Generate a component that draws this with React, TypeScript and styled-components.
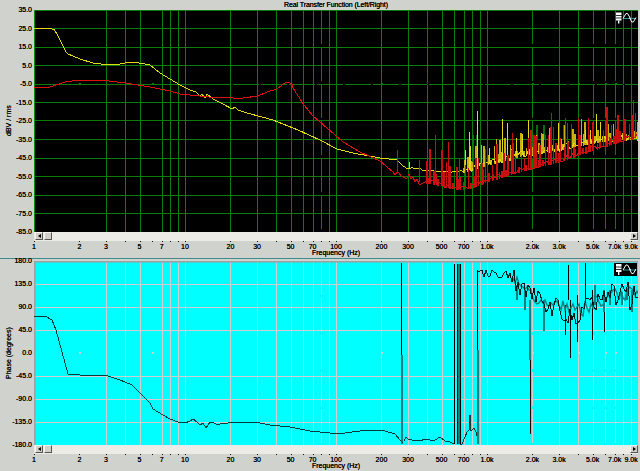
import React from "react";
import styled, { createGlobalStyle } from "styled-components";

const Global = createGlobalStyle`
  html, body { margin: 0; padding: 0; background: #d0d2ce; }
`;

const Page = styled.div`
  width: 640px;
  height: 471px;
  overflow: hidden;
  background: #d0d2ce;
  color: #000;
  font-family: "Liberation Sans", Arial, sans-serif;
  font-size: 7px;
  text-shadow: 0 0 0.4px #000;
  display: flex;
  flex-direction: column;
`;
const Pane = styled.section<{ $h: number; $rule?: boolean }>`
  height: ${(p) => p.$h}px;
  flex: none;
  display: flex;
  flex-direction: column;
  box-sizing: border-box;
  border-bottom: ${(p) => (p.$rule ? "1px solid #3f8a8a" : "none")};
`;
const Title = styled.div`
  height: 10px;
  flex: none;
  line-height: 10px;
  text-align: center;
  padding-left: 32px;
  letter-spacing: -0.1px;
`;
const TopGap = styled.div`
  height: 2px;
  flex: none;
`;
const PlotRow = styled.div`
  display: flex;
  flex: none;
`;
const AxisCol = styled.div`
  width: 34px;
  flex: none;
  display: flex;
`;
const AxisName = styled.div`
  width: 18px;
  writing-mode: vertical-rl;
  transform: rotate(180deg);
  text-align: center;
  line-height: 18px;
  white-space: nowrap;
`;
const Ticks = styled.div<{ $h: number }>`
  width: 14px;
  height: ${(p) => p.$h + 8}px;
  margin: -4px 0;
  padding-right: 3px;
  display: flex;
  flex-direction: column;
  justify-content: space-between;
  align-items: flex-end;
  white-space: nowrap;
  line-height: 8px;
`;
const Plot = styled.svg`
  display: block;
  flex: none;
`;
const Strip = styled.div`
  margin-left: 34px;
  width: 604px;
  height: 9px;
  background: #ecebe6;
  display: flex;
  align-items: flex-start;
  padding-left: 1px;
  box-sizing: border-box;
  flex: none;
`;
const ScrollBtn = styled.div<{ $end?: boolean }>`
  width: 8px;
  height: 8px;
  flex: none;
  box-sizing: border-box;
  margin-left: ${(p) => (p.$end ? "auto" : "0")};
  background: #d4d0c8;
  border: 1px solid;
  border-color: #f4f4f0 #555 #555 #f4f4f0;
  display: flex;
  align-items: center;
  justify-content: center;
`;
const Thumb = styled(ScrollBtn)`
  margin-left: 1px;
`;
const Arrow = styled.i<{ $right?: boolean }>`
  display: block;
  width: 0;
  height: 0;
  border-top: 2.5px solid transparent;
  border-bottom: 2.5px solid transparent;
  border-right: ${(p) => (p.$right ? "0" : "3px solid #000")};
  border-left: ${(p) => (p.$right ? "3px solid #000" : "0")};
`;
const XAxis = styled.svg`
  display: block;
  flex: none;
`;
const XTick = styled.text`
  font-family: "Liberation Sans", Arial, sans-serif;
  font-size: 7px;
  fill: #000;
  text-anchor: middle;
`;
const XName = styled.div`
  height: 8px;
  line-height: 8px;
  text-align: center;
  padding-left: 32px;
  margin-top: -1px;
  flex: none;
`;
const Trace = styled.polyline<{ $c: string }>`
  fill: none;
  stroke: ${(p) => p.$c};
  stroke-width: 1;
  shape-rendering: crispEdges;
`;

const fx = (f: number) => 34 + 151 * Math.log10(f);
type Pt = [number, number];
const path = (p: Pt[]) => p.map((q) => q[0] + "," + q[1]).join(" ");
const interp = (p: Pt[], x: number) => {
  for (let i = 1; i < p.length; i++) {
    if (x <= p[i][0]) {
      const t = (x - p[i - 1][0]) / (p[i][0] - p[i - 1][0]);
      return p[i - 1][1] + t * (p[i][1] - p[i - 1][1]);
    }
  }
  return p[p.length - 1][1];
};
const rng = (seed: number) => {
  let s = seed;
  return () => {
    s = (s * 1664525 + 1013904223) % 4294967296;
    return s / 4294967296;
  };
};

const mult = [1, 2, 3, 4, 5, 6, 7, 8, 9];
const allF = [1, 10, 100, 1000].flatMap((d) => mult.map((m) => m * d));
const gridF = allF.filter((f) => f > 1 && f !== 2 && f !== 6);
const brokenF = [80, 2000, 5000, 6000, 7000];
const labelF: [number, string][] = [
  [1, "1"], [2, "2"], [3, "3"], [5, "5"], [7, "7"], [10, "10"], [20, "20"], [30, "30"], [50, "50"], [70, "70"],
  [100, "100"], [200, "200"], [300, "300"], [500, "500"], [700, "700"], [1000, "1.0k"], [2000, "2.0k"],
  [3000, "3.0k"], [5000, "5.0k"], [7000, "7.0k"], [9000, "9.0k"],
];

const Grid = ({ ys, top, bottom, color, zeroDots, zero }: { ys: number[]; top: number; bottom: number; color: string; zeroDots: number; zero?: boolean }) => (
  <g stroke={color} strokeWidth={1} shapeRendering="crispEdges">
    {gridF.map((f) => (
      <line key={f} x1={Math.round(fx(f)) + 0.5} x2={Math.round(fx(f)) + 0.5} y1={top} y2={bottom} strokeDasharray={brokenF.includes(f) ? "34 3" : undefined} />
    ))}
    {ys.map((y) => (
      <line key={y} x1={34} x2={638} y1={y + 0.5} y2={y + 0.5} />
    ))}
    {zero && <line x1={231} x2={638} y1={zeroDots + 0.5} y2={zeroDots + 0.5} stroke="#000" strokeDasharray="2 26" />}
    {[2, 6, 200, 2000, 4000, 6000, 7000].map((f) => (
      <rect key={f} x={Math.round(fx(f))} y={zeroDots - 1} width={2} height={2} fill={color} stroke="none" />
    ))}
  </g>
);

const ToolIcons = ({ y, boxed }: { y: number; boxed?: boolean }) => (
  <g transform={`translate(0 ${y})`} fill="none">
    {boxed && <rect x={614} y={-1} width={23} height={13} fill="#000" />}
    <rect x={616.5} y={0.5} width={4.5} height={7} fill="#fff" stroke="#fff" />
    <path d="M616 3h6M616 5.5h6" stroke="#000" strokeWidth={0.8} />
    <path d="M618.7 8v3" stroke="#fff" strokeWidth={1.4} />
    <path d="M623 6h13" stroke="#2f9a8f" strokeWidth={1} />
    <path d="M623 6l3-5h1.5l3 5" stroke="#fff" strokeWidth={1} />
    <path d="M629.5 5l2.2 4.5h1.6L636 5" stroke="#fff" strokeWidth={1} />
  </g>
);

/* upper traces */
const yellowLow: Pt[] = [[34,28],[42,28],[52,29],[54,29],[58,36],[66,52],[68,54],[80,59],[93,63],[105,64.5],[120,64],[128,62.5],[132,62],[145,64],[150,65],[160,73],[170,79],[180,85],[190,90],[196,92],[200,96],[202,94],[205,98],[207,94],[213,99],[223,104],[232,109],[235,107],[238,110],[247,113],[273,120],[293,128],[298,130],[320,140],[337,149],[353,153],[380,158],[397,160],[404,167]];
const redLow: Pt[] = [[34,88],[50,87],[65,82],[75,80.5],[105,80.5],[125,83],[150,87],[170,91],[180,94],[200,96],[213,97.5],[233,98],[243,98],[258,96],[267,92],[277,89],[282,85],[287,82],[290,83],[292,84],[293,88],[304,105],[313,116],[327,128],[343,142],[360,152],[380,161],[393,172]];
const redFloor: Pt[] = [[393,172],[410,177],[420,182],[430,182],[455,188],[470,187],[490,179],[520,170],[560,160],[600,146],[638,135]];
const yellowFloor: Pt[] = [[404,167],[420,169],[450,172],[470,170],[480,165],[520,155],[560,148],[600,140],[638,137]];

const Upper = () => {
  const r = rng(7);
  const yellowNoise: Pt[] = [];
  const redNoise: Pt[] = [[393, 172]];
  for (let x = 404; x <= 638; x += 2) {
    yellowNoise.push([x, Math.round(interp(yellowFloor, x) + (r() - 0.5) * (x > 470 ? 8 : 2))]);
  }
  for (let x = 395; x <= 638; x += 2) {
    redNoise.push([x, Math.round(interp(redFloor, x) + (r() - 0.5) * 5)]);
  }
  const ySp: [number, number][] = [[409,162],[469,132],[477,111],[502,119],[507,123],[528,120],[596,114],[465,150],[470,146],[473,150],[489,148],[516,138],[522,134],[536,135],[558,123],[585,130],[590,130],[600,122]];
  const rSp: [number, number][] = [[397,150],[419,160],[435,135],[448,142],[459,158],[473,135],[512,133],[551,113],[565,118],[578,118],[588,118],[611,125],[623,120],[633,100],[545,135]];
  const gSp: [number, number][] = [[537,125],[544,125],[477,135],[564,125]];
  const fillY: number[][] = [];
  const fillR: number[][] = [];
  for (let x = 462; x < 638; x += 2.5) {
    const fy = interp(yellowFloor, x);
    fillY.push([Math.round(x + r() * 2), fy, fy - 3 - Math.pow(r(), 2) * 26, r() > 0.3 ? 2 : 1]);
  }
  for (let x = 424; x < 638; x += 2.5) {
    const fr = interp(redFloor, x + 1);
    fillR.push([Math.round(x + 1 + r() * 2), fr, fr - 4 - Math.pow(r(), 2) * 34, r() > 0.3 ? 2 : 1]);
  }
  return (
    <Plot width={604} height={222} viewBox="34 10 604 222">
      <rect x={34} y={10} width={604} height={222} fill="#000" />
      <Grid ys={[10, 28, 47, 65, 84, 102, 120, 139, 158, 176, 195, 213]} top={10} bottom={232} color="#0a7d0a" zeroDots={84} zero />
      <line x1={34.5} x2={34.5} y1={10} y2={232} stroke="#0a8f0a" />
      <Trace points={path(yellowLow)} $c="#e0d818" />
      <Trace points={path(redLow)} $c="#e01010" />
      <g shapeRendering="crispEdges">
        {gSp.map(([x, y]) => <line key={x} x1={x} x2={x} y1={y} y2={y + 15} stroke="#0a6f0a" strokeWidth={2} />)}
        {fillY.map((s, i) => <line key={i} x1={s[0]} x2={s[0]} y1={s[1] + 2} y2={s[2]} stroke="#c8b010" strokeWidth={s[3]} />)}
        {ySp.map(([x, y]) => <line key={x} x1={x + 0.5} x2={x + 0.5} y1={y} y2={interp(yellowFloor, x)} stroke="#e0d818" strokeWidth={1} />)}
      </g>
      <Trace points={path(yellowNoise)} $c="#e0d818" />
      <g shapeRendering="crispEdges">
        {rSp.map(([x, y]) => <line key={x} x1={x + 0.5} x2={x + 0.5} y1={y} y2={interp(redFloor, x)} stroke="#c81010" strokeWidth={1} />)}
        {fillR.map((s, i) => <line key={i} x1={s[0]} x2={s[0]} y1={s[1] + 2} y2={s[2]} stroke="#c81010" strokeWidth={s[3]} />)}
      </g>
      <Trace points={path(redNoise)} $c="#d01010" />
      <ToolIcons y={12.5} />
    </Plot>
  );
};

/* lower traces */
const phaseLow: Pt[] = [[34,316],[45,316],[52,320],[56,330],[68,374],[80,375],[95,375],[105,375],[120,380],[132,385],[140,393],[150,403],[153,409],[163,415],[170,419],[178,422],[185,423],[190,421],[193,419],[197,422],[200,425],[203,423],[206,428],[210,422],[214,423],[218,425],[222,423],[226,424],[230,422],[240,422],[255,422],[270,425],[290,427],[310,431],[330,433],[345,433],[360,431],[375,430],[385,431],[395,434],[400,440],[403,443]];
const midNoise: Pt[] = [[404,441],[406,437],[408,439],[412,440],[416,440],[420,441],[425,439],[430,440],[435,440],[440,437],[445,441],[450,442],[454,444]];
const tail: Pt[] = [[460,444],[462,444],[465,437],[467,432],[469,430],[470,415],[471,431],[474,428],[476,432],[477,436]];
const hfBase: Pt[] = [[478,274],[510,274],[520,285],[535,298],[545,305],[560,305],[570,310],[580,310],[590,303],[600,298],[620,296],[638,293]];

const Lower = () => {
  const r = rng(31);
  const hf: Pt[] = [];
  const hfTeal: Pt[] = [];
  for (let x = 478; x <= 638; x += 2) {
    const amp = x < 510 ? 8 : x < 560 ? 22 : 32;
    hf.push([x, Math.round(interp(hfBase, x) + (r() - 0.5) * amp)]);
    if (x > 510) hfTeal.push([x + 1, Math.round(interp(hfBase, x) + (r() - 0.5) * amp * 0.5)]);
  }
  const teal: [number, number, number][] = [[401.5,355,444],[458.5,264,444],[477.5,350,444],[530,300,360],[544,300,331],[525,290,310],[517,285,300],[604,290,312],[595,285,305],[610,290,305],[622,292,305],[632,290,312],[627,288,300]];
  const black: [number, number, number][] = [[401.5,263,355],[454.5,264,444],[457,264,444],[460.5,264,444],[477.5,270,350],[530,360,434],[570,300,358],[565,305,335],[577,295,342],[604,312,332],[568,265,300],[585,263,305],[592,290,340]];
  return (
    <Plot width={604} height={184} viewBox="34 261 604 184">
      <rect x={34} y={261} width={604} height={184} fill="#00ffff" />
      <Grid ys={[284, 307, 330, 376, 399, 422]} top={261} bottom={445} color="#cfcfcf" zeroDots={353} />
      <path d="M34 261.5H638M34.5 261V445" stroke="#a0a0a0" strokeWidth={2} fill="none" />
      <g shapeRendering="crispEdges">
        {teal.map(([x, a, b], i) => <line key={i} x1={x} x2={x} y1={a} y2={b} stroke="#128080" strokeWidth={2} />)}
        {black.map(([x, a, b], i) => <line key={i} x1={x} x2={x} y1={a} y2={b} stroke="#000" strokeWidth={1} />)}
      </g>
      <Trace points={path(phaseLow)} $c="#063a3a" />
      <Trace points={path(midNoise)} $c="#063a3a" />
      <Trace points={path(tail)} $c="#063a3a" />
      <polyline points={path(hfTeal)} fill="none" stroke="#128080" strokeWidth={1.4} />
      <Trace points={path(hf)} $c="#041c1c" />
      <ToolIcons y={264} boxed />
    </Plot>
  );
};

const FreqAxis = () => (
  <XAxis width={640} height={9} viewBox="0 0 640 9">
    <g fill="#111" shapeRendering="crispEdges">
      {allF.map((f) => <rect key={f} x={Math.round(fx(f))} y={0} width={1} height={1} />)}
    </g>
    {labelF.map(([f, t]) => <XTick key={t} x={fx(f)} y={8}>{t}</XTick>)}
  </XAxis>
);

const Scroller = () => (
  <Strip>
    <ScrollBtn><Arrow /></ScrollBtn>
    <Thumb />
    <ScrollBtn $end><Arrow $right /></ScrollBtn>
  </Strip>
);

const upperTicks = ["35.0","25.0","15.0","5.0","-5.0","-15.0","-25.0","-35.0","-45.0","-55.0","-65.0","-75.0","-85.0"];
const lowerTicks = ["180.0","135.0","90.0","45.0","0.0","-45.0","-90.0","-135.0","-180.0"];

export default function App() {
  return (
    <Page>
      <Global />
      <Pane $h={259} $rule>
        <Title>Real Transfer Function (Left/Right)</Title>
        <PlotRow>
          <AxisCol>
            <AxisName>dBV / rms</AxisName>
            <Ticks $h={222}>{upperTicks.map((t) => <span key={t}>{t}</span>)}</Ticks>
          </AxisCol>
          <Upper />
        </PlotRow>
        <Scroller />
        <FreqAxis />
        <XName>Frequency (Hz)</XName>
      </Pane>
      <Pane $h={212}>
        <TopGap />
        <PlotRow>
          <AxisCol>
            <AxisName>Phase (degrees)</AxisName>
            <Ticks $h={184}>{lowerTicks.map((t) => <span key={t}>{t}</span>)}</Ticks>
          </AxisCol>
          <Lower />
        </PlotRow>
        <Scroller />
        <FreqAxis />
        <XName>Frequency (Hz)</XName>
      </Pane>
    </Page>
  );
}
